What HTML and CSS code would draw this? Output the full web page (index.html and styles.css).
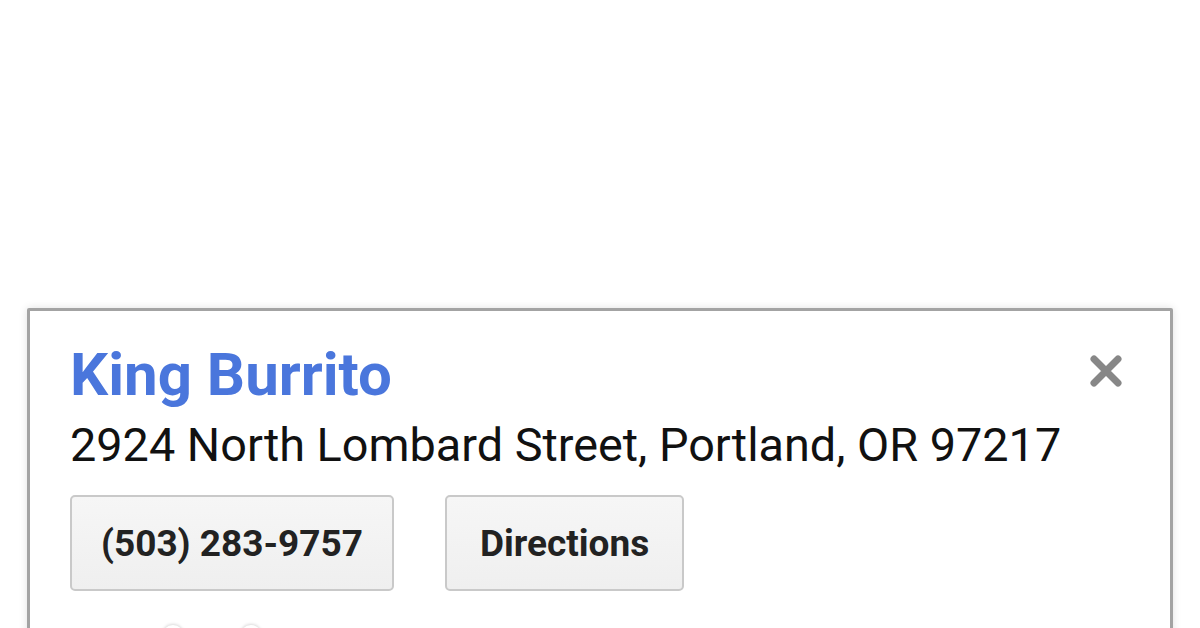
FILE: index.html
```html
<!DOCTYPE html>
<html>
<head>
<meta charset="utf-8">
<link rel="stylesheet" href="styles.css">
</head>
<body>
<div class="page">
  <div class="card">
    <div class="head">
      <h1 class="title">King Burrito</h1>
      <button class="close" aria-label="Close">
        <svg width="36" height="36" viewBox="0 0 36 36"><path d="M6 6 L30 30 M30 6 L6 30" stroke="#878787" stroke-width="7" stroke-linecap="round"/></svg>
      </button>
    </div>
    <div class="address">2924 North Lombard Street, Portland, OR 97217</div>
    <div class="actions">
      <button class="btn btn-phone">(503) 283-9757</button>
      <button class="btn btn-dir">Directions</button>
    </div>
    <div class="extras">
      <span class="dot"></span>
      <span class="dot"></span>
    </div>
  </div>
</div>
</body>
</html>
```

FILE: styles.css
```css
html, body {
  margin: 0;
  padding: 0;
  background: #ffffff;
  overflow: hidden;
}
.page {
  width: 1200px;
  height: 628px;
  padding: 308px 0 0 27px;
  box-sizing: border-box;
  font-family: Roboto, "Liberation Sans", sans-serif;
}
.card {
  width: 1146px;
  height: 400px;
  box-sizing: border-box;
  border: 3px solid #a3a3a3;
  border-radius: 2px;
  box-shadow: 0 0 8px rgba(0,0,0,0.12);
  background: #fff;
  padding: 24px 40px 0 40px;
}
.head {
  display: flex;
  justify-content: space-between;
  align-items: flex-start;
}
.title {
  margin: 0;
  font-size: 60px;
  line-height: 80px;
  font-weight: 700;
  color: #4a76dc;
}
.close {
  border: none;
  background: none;
  padding: 0;
  margin: 18px 6px 0 0;
  width: 36px;
  height: 36px;
  line-height: 0;
}
.address {
  font-size: 46.8px;
  line-height: 56px;
  color: #111;
  margin-top: 2px;
}
.actions {
  display: flex;
  gap: 51px;
  margin-top: 22px;
}
.btn {
  font-family: Roboto, "Liberation Sans", sans-serif;
  font-size: 37px;
  font-weight: 700;
  color: #222;
  height: 96px;
  border: 2px solid #c9c9c9;
  border-radius: 5px;
  background: linear-gradient(#f6f6f6, #efefef);
}
.btn-phone {
  padding: 0 29px;
}
.btn-dir {
  padding: 0 33px;
}
.extras {
  display: flex;
  gap: 56px;
  margin: 34px 0 0 92px;
}
.dot {
  width: 22px;
  height: 22px;
  border-radius: 50%;
  box-shadow: 0 -1px 3px rgba(0,0,0,0.15);
}
```
